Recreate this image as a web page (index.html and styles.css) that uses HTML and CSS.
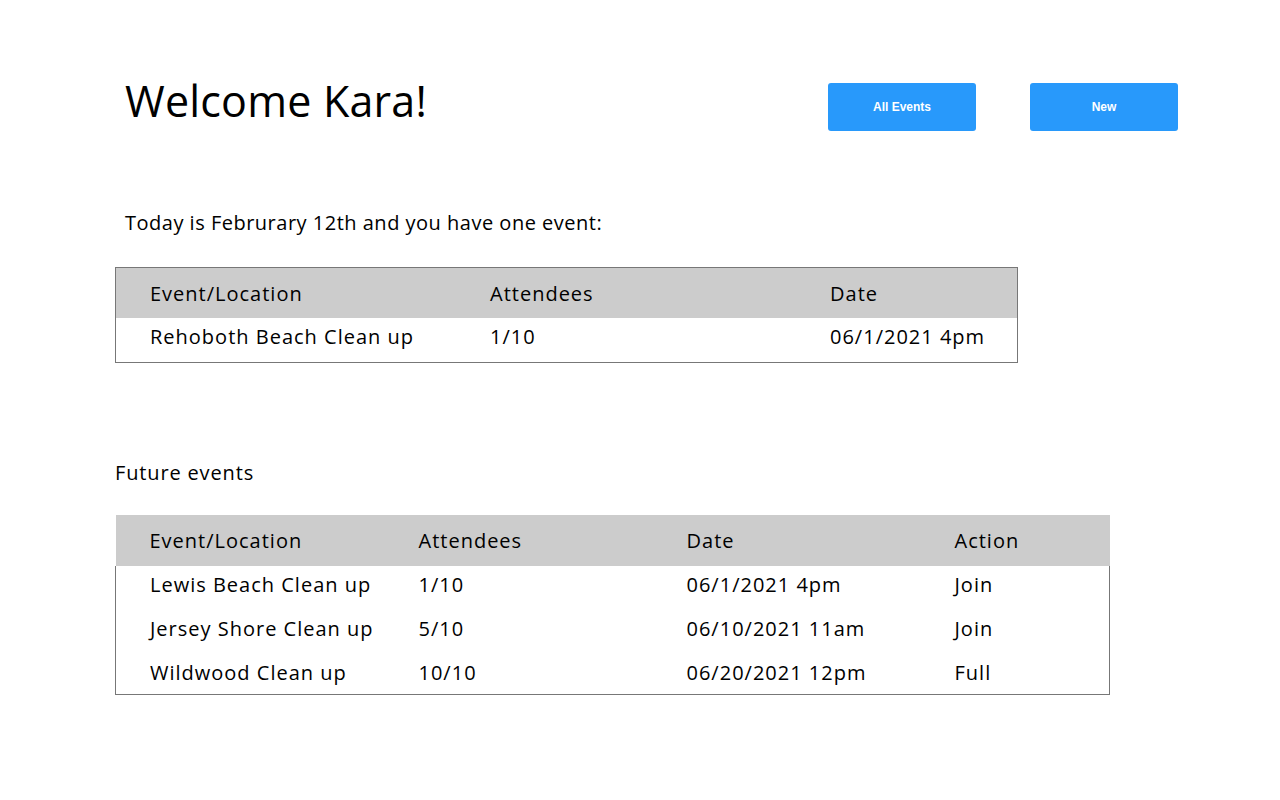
FILE: index.html
```html
<!DOCTYPE html>
<html>
<head>
<meta charset="utf-8">
<link rel="stylesheet" href="styles.css">
</head>
<body>
<div class="page">
  <header class="top">
    <h1 class="welcome">Welcome Kara!</h1>
    <div class="actions">
      <button class="btn">All Events</button>
      <button class="btn">New</button>
    </div>
  </header>

  <p class="today">Today is Februrary 12th and you have one event:</p>

  <table class="events today-table">
    <thead>
      <tr><th>Event/Location</th><th>Attendees</th><th>Date</th></tr>
    </thead>
    <tbody>
      <tr><td>Rehoboth Beach Clean up</td><td>1/10</td><td>06/1/2021 4pm</td></tr>
    </tbody>
  </table>

  <p class="future">Future events</p>

  <table class="events future-table">
    <thead>
      <tr><th>Event/Location</th><th>Attendees</th><th>Date</th><th>Action</th></tr>
    </thead>
    <tbody>
      <tr><td>Lewis Beach Clean up</td><td>1/10</td><td>06/1/2021 4pm</td><td>Join</td></tr>
      <tr><td>Jersey Shore Clean up</td><td>5/10</td><td>06/10/2021 11am</td><td>Join</td></tr>
      <tr class="last"><td>Wildwood Clean up</td><td>10/10</td><td>06/20/2021 12pm</td><td>Full</td></tr>
    </tbody>
  </table>
</div>
</body>
</html>
```

FILE: styles.css
```css
html, body {
  margin: 0;
  padding: 0;
  background: #ffffff;
}

body {
  font-family: "Open Sans", "DejaVu Sans", sans-serif;
  color: #000;
}

.page {
  padding: 83px 0 0 115px;
  width: 1063px;
}

.top {
  display: flex;
  justify-content: space-between;
  align-items: flex-start;
  height: 48px;
}

.welcome {
  margin: 0 0 0 10px;
  font-weight: 400;
  font-size: 43px;
  line-height: 36px;
  letter-spacing: 0.2px;
}

.actions {
  display: flex;
  gap: 54px;
}

.btn {
  width: 148px;
  height: 48px;
  border: none;
  border-radius: 3px;
  background: #2899fb;
  color: #fff;
  font-family: "Liberation Sans", Arial, sans-serif;
  font-weight: 700;
  font-size: 12px;
  padding: 0;
}

.today {
  margin: 80px 0 0 10px;
  font-size: 20px;
  line-height: 24px;
  letter-spacing: 0.5px;
}

.events {
  border-collapse: collapse;
  font-size: 20px;
  letter-spacing: 1px;
}

.events th,
.events td {
  text-align: left;
  font-weight: 400;
  padding: 0 0 0 34px;
  white-space: nowrap;
}

.events th {
  background: #cccccc;
  height: 51px;
}

.events td {
  height: 36px;
  padding-bottom: 8px;
}

.today-table {
  margin-top: 32px;
  width: 903px;
  border: 1px solid #777;
}

.today-table th {
  height: 50px;
}

.today-table th:nth-child(1),
.today-table th:nth-child(2) {
  width: 306px;
}

.future {
  margin: 98px 0 0 0;
  font-size: 20px;
  line-height: 24px;
  letter-spacing: 0.85px;
}

.future-table {
  margin-top: 30px;
  width: 995px;
  table-layout: fixed;
}

.future-table th:nth-child(1) {
  width: 235px;
}

.future-table th:nth-child(2),
.future-table th:nth-child(3) {
  width: 234px;
}

.future-table td:first-child {
  border-left: 1px solid #777;
}

.future-table td:last-child {
  border-right: 1px solid #777;
}

.future-table tr.last td {
  border-bottom: 1px solid #777;
  height: 36px;
  padding-bottom: 4px;
}
```
